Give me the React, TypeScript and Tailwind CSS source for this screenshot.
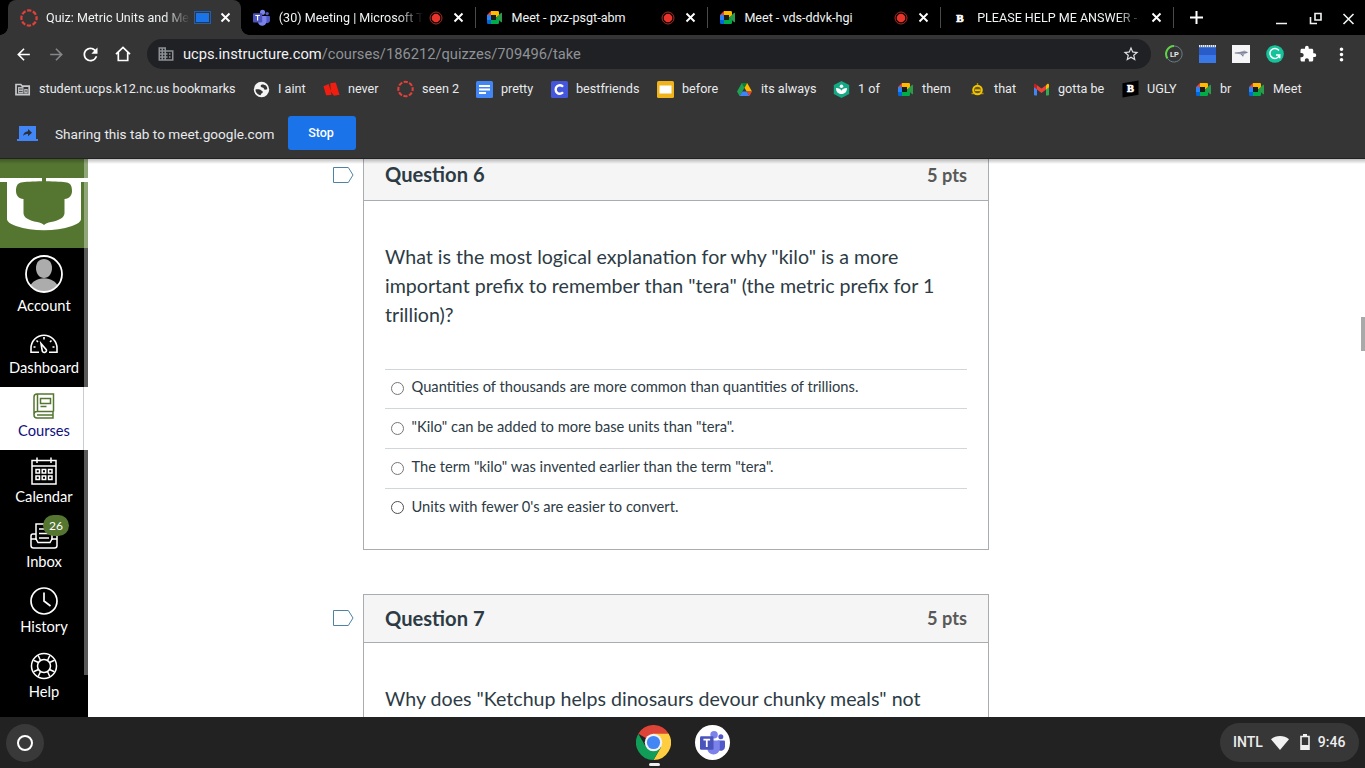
import type { ReactNode } from 'react';
import {
  MdArrowBack,
  MdArrowForward,
  MdBusiness,
  MdExtension,
  MdMoreVert,
  MdRefresh,
  MdStarBorder,
} from 'react-icons/md';

/* ---------- favicons ---------- */

function CanvasRing() {
  return (
    <svg width="18" height="18" viewBox="0 0 18 18">
      <circle cx="9" cy="9" r="7.6" fill="none" stroke="#e2403a" strokeWidth="2.2" strokeDasharray="4.4 1.57" strokeDashoffset="2.2" />
    </svg>
  );
}

function MeetIcon() {
  return (
    <svg width="17" height="17" viewBox="0 0 17 17">
      <path d="M1 6 5 2v4z" fill="#ea4335" />
      <path d="M1 6h4v5H1z" fill="#2684fc" />
      <path d="M1 11h4v4H2.2A1.2 1.2 0 0 1 1 13.8z" fill="#0066da" />
      <path d="M5 2h6.8A1.2 1.2 0 0 1 13 3.2V7l-3 1.5V6H5z" fill="#ffba00" />
      <path d="M5 11h5V8.5l3 2v3.3a1.2 1.2 0 0 1-1.2 1.2H5z" fill="#00ac47" />
      <path d="m10 8.5 5.2-4.7c.4-.3.8-.1.8.4v8.600c0 .5-.4.7-.8.4z" fill="#2b9a4a" />
      <path d="M5 6h5v5H5z" fill="#1c1a14" />
    </svg>
  );
}

function TeamsIcon({ size = 17 }: { size?: number }) {
  return (
    <svg width={size} height={size} viewBox="0 0 24 24">
      <circle cx="20" cy="6.5" r="2.4" fill="#5059c9" />
      <path d="M17 10h6a1 1 0 0 1 1 1v5a4 4 0 0 1-6 3.4z" fill="#5059c9" />
      <circle cx="13.5" cy="4.5" r="3.6" fill="#7b83eb" />
      <path d="M7.5 10H18a1 1 0 0 1 1 1v6.5a6 6 0 0 1-12 0z" fill="#7b83eb" />
      <rect x="0" y="6" width="13" height="13" rx="1.2" fill="#4b53bc" />
      <path d="M3.3 9.2h6.4M6.5 9.2v7" stroke="#fff" strokeWidth="1.7" fill="none" />
    </svg>
  );
}

function BrainlyIcon({ skew = false }: { skew?: boolean }) {
  return (
    <svg width="18" height="18" viewBox="0 0 18 18">
      <path d={skew ? 'M.5 3 17.500 0v15L.5 18z' : 'M0 0h18v18H0z'} fill="#000" />
      <text x="9" y="12.500" textAnchor="middle" fontSize="11" fontWeight="900" fill="#fff" stroke="#fff" strokeWidth=".7" fontFamily="Liberation Serif, serif">
        B
      </text>
    </svg>
  );
}

function FolderIcon() {
  return (
    <svg width="17" height="17" viewBox="0 0 17 17">
      <path d="M2 3.500h4.800l1.500 1.700h6.900v8.500H2z" fill="none" stroke="#c8cacd" strokeWidth="1.700" />
      <path d="M4 6h5.500v6.500H4zM10.200 8h3.500v4.500h-3.500z" fill="#b5b7ba" />
      <path d="M5 8h3.500M5 10.500h3.500M11 10h2" stroke="#353535" strokeWidth=".8" />
    </svg>
  );
}

function GlobeIcon() {
  return (
    <svg width="17" height="17" viewBox="0 0 17 17">
      <circle cx="8.500" cy="8.500" r="7.700" fill="#f4f4f4" />
      <path d="M9 3.500c-1.500.5-2 2-.5 2.700 1.200.6 2.500.4 2.500 1.800 0 1 1.500 1 3.200.3.3-2.500-1.200-4.800-5.200-4.800zM2.500 8.500C4 8 7 8 7.800 9c.6.9 2 .8 2 2 0 1.500-1.800 1-2.100 3.200-3-.4-5.200-2.600-5.200-5.700z" fill="#353535" />
    </svg>
  );
}

function RedMark() {
  return (
    <svg width="18" height="17" viewBox="0 0 18 17">
      <path d="M.500 5 6 2.800l2.300 7.200L7.600 2l5.900-1L17.500 14l-6 1.200L8.500 11l.5 3.300-5.700.4z" fill="#f01d10" />
    </svg>
  );
}

function DocsIcon() {
  return (
    <svg width="17" height="17" viewBox="0 0 17 17">
      <rect width="17" height="17" rx="1.500" fill="#4285f4" />
      <path d="M3 5h11M3 8.500h11M3 12h7" stroke="#fff" strokeWidth="1.800" />
    </svg>
  );
}

function CleverIcon() {
  return (
    <svg width="17" height="17" viewBox="0 0 17 17">
      <rect width="17" height="17" rx="1.500" fill="#4456dc" />
      <path d="M12 5.700A4.200 4.200 0 1 0 12 11.300" fill="none" stroke="#fff" strokeWidth="2.400" />
    </svg>
  );
}

function SlidesIcon() {
  return (
    <svg width="17" height="17" viewBox="0 0 17 17">
      <rect width="17" height="17" rx="1.500" fill="#f0b41a" />
      <rect x="2.500" y="4.500" width="12" height="8" fill="#fff" />
    </svg>
  );
}

function DriveIcon() {
  return (
    <svg width="17" height="17" viewBox="0 0 17 17">
      <path d="M5.800 2h5.400L8.500 6.700z" fill="#00832d" />
      <path d="M5.800 2 1 10.500 3.600 15 8.500 6.700z" fill="#1fa350" />
      <path d="M11.200 2 16 10.500h-5.300L8.500 6.700z" fill="#ffba00" />
      <path d="M16 10.500 13.400 15l-2.700-4.500z" fill="#ea4335" />
      <path d="M6.300 10.500h4.400L13.400 15H3.600z" fill="#3f84f5" />
    </svg>
  );
}

function HexIcon() {
  return (
    <svg width="17" height="17" viewBox="0 0 17 17">
      <path d="m8.500 0 7.700 4v9l-7.700 4-7.700-4V4z" fill="#14a884" />
      <circle cx="8.500" cy="5.300" r="1.800" fill="#fff" />
      <path d="M3 7c3 0 4.700 1 5.500 2.700C9.300 8 11 7 14 7c0 3.700-2 6-5.500 6S3 10.700 3 7z" fill="#fff" />
    </svg>
  );
}

function EmojiIcon() {
  return (
    <svg width="17" height="17" viewBox="0 0 17 17">
      <path d="M8.500 2v4M2.500 12.500h12" stroke="#b58e00" strokeWidth="1.400" />
      <circle cx="8.500" cy="9" r="4.300" fill="#6b5a0a" stroke="#f2c500" strokeWidth="2" />
      <path d="M6 9.200h5.500" stroke="#f2c500" strokeWidth="1.700" />
    </svg>
  );
}

function GmailIcon() {
  return (
    <svg width="17" height="17" viewBox="0 0 17 17">
      <path d="M1 4.500 4 6v8.500H2a1 1 0 0 1-1-1z" fill="#4285f4" />
      <path d="M16 4.500 13 6v8.500h2a1 1 0 0 0 1-1z" fill="#34a853" />
      <path d="M13 4.200 14.200 3C15 2.300 16 3 16 4v2.200l-3 2.300z" fill="#fbbc04" />
      <path d="M4 8.500V4.200L8.500 7.600 13 4.200v4.300L8.500 12z" fill="#ea4335" />
      <path d="M1 6.200V4c0-1 1-1.700 1.800-1L4 4.200v4.300z" fill="#c5221f" />
    </svg>
  );
}

/* ---------- tab strip ---------- */

function RecordDot() {
  return (
    <svg width="14" height="14" viewBox="0 0 14 14">
      <circle cx="7" cy="7" r="6" fill="none" stroke="#b3261e" strokeWidth="1" />
      <circle cx="7" cy="7" r="4.300" fill="#e8352c" />
    </svg>
  );
}

function CastingBadge() {
  return (
    <span className="flex h-[13px] w-[17px] items-center justify-center border border-[#1a5fb8]">
      <span className="h-[9px] w-[13px] bg-[#1a73e8]" />
    </span>
  );
}

type Tab = { title: string; icon: ReactNode; badge?: ReactNode; active?: boolean; fade?: boolean };

const tabs: Tab[] = [
  { title: 'Quiz: Metric Units and Me', icon: <CanvasRing />, badge: <CastingBadge />, active: true, fade: true },
  { title: '(30) Meeting | Microsoft T', icon: <TeamsIcon />, badge: <RecordDot />, fade: true },
  { title: 'Meet - pxz-psgt-abm', icon: <MeetIcon />, badge: <RecordDot /> },
  { title: 'Meet - vds-ddvk-hgi', icon: <MeetIcon />, badge: <RecordDot /> },
  { title: 'PLEASE HELP ME ANSWER -', icon: <BrainlyIcon />, fade: true },
];

function TabStrip() {
  return (
    <div className="flex h-[35px] bg-black pl-2">
      {tabs.map((tab) => (
        <div
          key={tab.title}
          className={[
            'relative flex h-full w-[232.800px] shrink-0 items-center pl-3 pr-[10px]',
            tab.active ? 'rounded-t-lg bg-[#353535]' : '',
          ].join(' ')}
        >
          {tab.active && (
            <>
              <span className="absolute -left-2 bottom-0 h-2 w-2 bg-[radial-gradient(circle_at_0_0,#000_7.500px,#353535_8px)]" />
              <span className="absolute -right-2 bottom-0 h-2 w-2 bg-[radial-gradient(circle_at_100%_0,#000_7.500px,#353535_8px)]" />
            </>
          )}
          <span className="flex w-[18px] shrink-0 justify-center">{tab.icon}</span>
          <span
            className={[
              'ml-2 min-w-0 flex-1 whitespace-nowrap text-[12.550px] leading-4 text-[#f1f3f4]',
              tab.fade ? '[mask-image:linear-gradient(to_right,#000_calc(100%-26px),transparent)]' : '',
            ].join(' ')}
          >
            {tab.title}
          </span>
          {tab.badge && <span className="ml-1 flex w-[18px] shrink-0 justify-center">{tab.badge}</span>}
          <svg className="ml-[8px] shrink-0" width="11" height="11" viewBox="0 0 11 11" stroke="#fff" strokeWidth="1.900">
            <path d="m1.500 1.500 8 8M9.500 1.500l-8 8" />
          </svg>
          {!tab.active && <span className="absolute -right-[2px] top-[7px] h-[21px] w-px bg-[#4a4a4a]" />}
        </div>
      ))}
      <div className="flex flex-1 items-center">
        <svg className="ml-[18px]" width="13" height="13" viewBox="0 0 13 13" stroke="#fff" strokeWidth="2">
          <path d="M6.500 0v13M0 6.500h13" />
        </svg>
        <svg className="ml-auto mr-[5px] mt-[2px]" width="84" height="18" viewBox="0 0 84 18" fill="none" stroke="#f1f3f4" strokeWidth="1.600">
          <path d="M0 13.500h11M39 3.500h6v6.500h-6zM34.500 7v6.500H41M67.500 4l10 10M77.500 4l-10 10" />
        </svg>
      </div>
    </div>
  );
}

/* ---------- toolbar ---------- */

function Toolbar() {
  return (
    <div className="flex h-[38px] items-center pl-[14px] text-white">
      <MdArrowBack className="h-[19px] w-[19px]" />
      <MdArrowForward className="ml-[14px] h-[19px] w-[19px] text-[#85878a]" />
      <MdRefresh className="ml-[14px] h-[21px] w-[21px]" />
      <svg className="ml-[14px]" width="16" height="18" viewBox="0 0 16 18" fill="none" stroke="#fff" strokeWidth="1.700">
        <path d="M1 9.200 8 2.500l7 6.700M3.300 7.500v8h9.400v-8" />
      </svg>
      <div className="ml-4 flex h-[30px] w-[1004px] items-center rounded-full bg-[#202124] pl-[10px] pr-[11px]">
        <MdBusiness className="h-[18px] w-[18px] text-[#8c9094]" />
        <span className="ml-2 text-[14.700px] text-[#f1f3f4]">
          ucps.instructure.com<span className="text-[#8f9296]">/courses/186212/quizzes/709496/take</span>
        </span>
        <MdStarBorder className="ml-auto h-[18px] w-[18px] text-[#dfe1e5]" />
      </div>
      <svg className="ml-[14px]" width="18" height="18" viewBox="0 0 18 18">
        <path d="M9 1a8 8 0 0 0-6.500 12.500" fill="none" stroke="#63d14a" strokeWidth="2" />
        <path d="M2.500 13.500A8 8 0 1 0 9 1" fill="none" stroke="#66828a" strokeWidth="1" />
        <text x="9.500" y="12" textAnchor="middle" fontSize="7.500" fontWeight="700" fill="#e6e6e6">
          LP
        </text>
      </svg>
      <svg className="ml-4" width="17" height="18" viewBox="0 0 17 18">
        <path d="M0 2h17v16H0z" fill="#3b78e7" />
        <path d="M0 3h17v7H0z" fill="#2a5cc7" />
        <path d="M0 1h17" stroke="#e8eaed" strokeWidth="2" strokeDasharray="1.500 .5" />
      </svg>
      <svg className="ml-4" width="18" height="18" viewBox="0 0 18 18">
        <path d="M0 0h18v18H0z" fill="#f5f5f7" />
        <path d="m1.500 8 6-1 5-1.500 4 2-4 1.500-1.500 3-2-2.500z" fill="#a3a5b8" />
        <path d="m3 8 12-.5M9 9l2 2" stroke="#6a6d86" strokeWidth=".7" />
      </svg>
      <svg className="ml-4" width="18" height="18" viewBox="0 0 18 18">
        <circle cx="9" cy="9" r="8.800" fill="#15c39a" />
        <path d="M13 5.500A5 5 0 1 0 13.700 10H10m3.700 0v3.300" fill="none" stroke="#fff" strokeWidth="1.500" />
      </svg>
      <MdExtension className="ml-[15px] h-[18px] w-[18px]" />
      <MdMoreVert className="ml-[14px] h-[21px] w-[21px]" />
    </div>
  );
}

type Bookmark = { label: string; icon: ReactNode; width: string };

const bookmarks: Bookmark[] = [
  { label: 'student.ucps.k12.nc.us bookmarks', icon: <FolderIcon />, width: 'w-[239px]' },
  { label: 'I aint', icon: <GlobeIcon />, width: 'w-[70px]' },
  { label: 'never', icon: <RedMark />, width: 'w-[74px]' },
  { label: 'seen 2', icon: <CanvasRing />, width: 'w-[79px]' },
  { label: 'pretty', icon: <DocsIcon />, width: 'w-[75px]' },
  { label: 'bestfriends', icon: <CleverIcon />, width: 'w-[106px]' },
  { label: 'before', icon: <SlidesIcon />, width: 'w-[79px]' },
  { label: 'its always', icon: <DriveIcon />, width: 'w-[97px]' },
  { label: '1 of', icon: <HexIcon />, width: 'w-[64px]' },
  { label: 'them', icon: <MeetIcon />, width: 'w-[72px]' },
  { label: 'that', icon: <EmojiIcon />, width: 'w-[64px]' },
  { label: 'gotta be', icon: <GmailIcon />, width: 'w-[89px]' },
  { label: 'UGLY', icon: <BrainlyIcon skew />, width: 'w-[73px]' },
  { label: 'br', icon: <MeetIcon />, width: 'w-[53px]' },
  { label: 'Meet', icon: <MeetIcon />, width: 'w-[60px]' },
];

function BookmarkBar() {
  return (
    <div className="flex h-8 items-center pl-[14px]">
      {bookmarks.map((b, i) => (
        <div key={i} className={`flex shrink-0 items-center gap-2 ${b.width}`}>
          <span className="flex w-[17px] shrink-0 justify-center">{b.icon}</span>
          <span className="whitespace-nowrap text-[12.620px] leading-4 text-[#e8eaed]">{b.label}</span>
        </div>
      ))}
    </div>
  );
}

function SharingBar() {
  return (
    <div className="flex h-[54px] items-center border-b border-[#222222] pl-[17px] pt-[3px]">
      <svg className="mt-px" width="21" height="16" viewBox="0 0 21 16">
        <path d="M2 0h17v13h2v2H0v-2h2z" fill="#4285f4" />
        <path d="M6 10c.5-3 2.500-4.500 5-4.700V3l4 3.700-4 3.600V8C9 8 7.300 8.500 6 10z" fill="#2b2f38" />
      </svg>
      <span className="ml-[17px] mt-[3px] w-[233px] whitespace-nowrap text-[13.600px] text-[#e8eaed]">
        Sharing this tab to meet.google.com
      </span>
      <button className="h-[34px] w-[68px] rounded-[3px] bg-[#1a73e8] pr-[2px] text-[12.500px] font-medium text-white">Stop</button>
    </div>
  );
}

/* ---------- canvas sidebar ---------- */

function DistrictLogo() {
  return (
    <svg className="block shrink-0" width="88" height="89" viewBox="0 0 88 89">
      <path d="M0 0h88v89H0z" fill="#557631" />
      <path d="M0 19h88v4h-7v37c0 3-4 5-9 7-9 3-18 4.200-28 4.200S25 70 16 67c-5-2-9-4-9-7V23H0z" fill="#fff" />
      <path d="M42 19h4v3.200c9 .2 17 .5 21 1.300 4.200 1 5 4.500 5 8.500s-2.500 8-7.500 8v14c0 5-6 7.500-13.500 9-3.500.7-5.500 1.500-7 3-1.500-1.500-3.500-2.300-7-3-7.500-1.500-13.500-4-13.500-9V40c-5 0-7.500-4-7.500-8s.8-7.500 5-8.500c4-.8 12-1.100 21-1.300z" fill="#557631" />
    </svg>
  );
}

function AvatarIcon() {
  return (
    <svg width="38" height="38" viewBox="0 0 38 38">
      <clipPath id="avatar-clip">
        <circle cx="19" cy="19" r="17.500" />
      </clipPath>
      <g clipPath="url(#avatar-clip)" fill="#acacac">
        <path d="M19 4c5 0 8 3.800 8 9 0 6-3.500 10-8 10s-8-4-8-10c0-5.200 3-9 8-9z" />
        <path d="M4 38c0-9 4-12 10-14 3-1 7-1 10 0 6 2 10 5 10 14z" />
      </g>
      <circle cx="19" cy="19" r="18" fill="none" stroke="#fff" strokeWidth="1.800" />
    </svg>
  );
}

function DashboardIcon() {
  return (
    <svg width="30" height="20" viewBox="0 0 30 20" fill="none" stroke="currentColor" strokeWidth="1.600">
      <path d="M10 18.200H2v-4a13 13 0 0 1 26 0v4h-8" />
      <path d="m12 9.500 5.300 6.200c1 2.500-2.800 4-4 1.500zM15 3v2.500M7.500 6.500l1.500 1.500M22.500 6.500 21 8M4.500 13h2M23.500 13h2" />
    </svg>
  );
}

function CoursesIcon() {
  return (
    <svg width="24" height="26" viewBox="0 0 24 26" fill="none" stroke="currentColor" strokeWidth="1.500">
      <path d="M21.500 18.500V1H5a3 3 0 0 0-3 3v18c0 2 1 3 3 3h16v-6.500H5a3 3 0 0 0-3 3M5.500 1v17.500M5 22h16" />
      <path d="M8.500 5.500h10v5h-10zM8.500 13.500h6" />
    </svg>
  );
}

function CalendarIcon() {
  return (
    <svg width="26" height="28" viewBox="0 0 26 28" fill="none" stroke="currentColor" strokeWidth="1.500">
      <path d="M1 3.500h24V27H1zM1 9h24M6 .5V6M20 .5V6" />
      <path d="M5 12.500h3.500V16H5zM11.200 12.500h3.500V16h-3.500zM17.500 12.500H21V16h-3.500zM5 19h3.500v3.500H5zM11.200 19h3.500v3.500h-3.500zM17.500 19H21v3.500h-3.500z" />
    </svg>
  );
}

function InboxIcon() {
  return (
    <svg width="28" height="26" viewBox="0 0 28 26" fill="none" stroke="currentColor" strokeWidth="1.500">
      <path d="M6 17V1h16v16M9 6h10M9 10.500h10M9 15h10" />
      <path d="M6 11H3c-1.200 0-2 1-2 2v9.500C1 24 2 25 3.500 25h21c1.500 0 2.500-1 2.500-2.500V13c0-1-.8-2-2-2h-3M1 16h5l2 3.500h12l2-3.500h5" />
    </svg>
  );
}

function HistoryIcon() {
  return (
    <svg width="28" height="28" viewBox="0 0 28 28" fill="none" stroke="currentColor" strokeWidth="1.700">
      <circle cx="14" cy="14" r="13" />
      <path d="M14 5.500V14l6.500 5" />
    </svg>
  );
}

function HelpIcon() {
  return (
    <svg width="28" height="28" viewBox="0 0 28 28" fill="none" stroke="currentColor" strokeWidth="1.500">
      <circle cx="14" cy="14" r="12.500" />
      <circle cx="14" cy="14" r="6.500" />
      <path d="m10.500 8.500-2.300-5M17.500 8.500l2.300-5M10.500 19.500l-2.300 5M17.500 19.500l2.300 5M8.500 10.500l-5-2.300M8.500 17.500l-5 2.300M19.500 10.500l5-2.300M19.500 17.500l5 2.300" />
    </svg>
  );
}

type NavItem = { label: string; icon: ReactNode; box: string; iconBox: string; badge?: string };

const navItems: NavItem[] = [
  { label: 'Account', icon: <AvatarIcon />, box: 'h-[75px] pt-[7px] text-white', iconBox: 'h-[41px] pb-[3px]' },
  { label: 'Dashboard', icon: <DashboardIcon />, box: 'h-[64px] pt-[8px] text-white', iconBox: 'h-[27px] pb-[2px]' },
  { label: 'Courses', icon: <CoursesIcon />, box: 'h-[63px] pt-[5px] bg-white text-[#557631]', iconBox: 'h-[29px] pb-[2px]' },
  { label: 'Calendar', icon: <CalendarIcon />, box: 'h-[65px] pt-[6px] text-white', iconBox: 'h-[31px] pb-[2px]' },
  { label: 'Inbox', icon: <InboxIcon />, box: 'h-[65px] pt-[6px] text-white', iconBox: 'h-[31px] pb-[2px]', badge: '26' },
  { label: 'History', icon: <HistoryIcon />, box: 'h-[65px] pt-[6px] text-white', iconBox: 'h-[31px] pb-[2px]' },
  { label: 'Help', icon: <HelpIcon />, box: 'h-[65px] pt-[6px] text-white', iconBox: 'h-[31px] pb-[2px]' },
];

function Sidebar() {
  return (
    <nav className="relative flex w-[88px] shrink-0 flex-col overflow-hidden bg-black font-['Lato',sans-serif]">
      <DistrictLogo />
      {navItems.map((item) => (
        <div key={item.label} className={`relative flex shrink-0 flex-col items-center ${item.box}`}>
          <span className={`flex items-center justify-center ${item.iconBox}`}>{item.icon}</span>
          <span className={['text-[14.700px] leading-[18px]', item.label === 'Courses' ? 'text-[#10107c]' : ''].join(' ')}>
            {item.label}
          </span>
          {item.badge && (
            <span className="absolute left-[43px] top-0 flex h-[21px] w-[26px] items-center justify-center rounded-full bg-[#557631] text-[12px] text-white">
              {item.badge}
            </span>
          )}
        </div>
      ))}
      <span className="absolute right-0 top-0 h-[516px] w-1 bg-white/35" />
      <span className="absolute right-1 top-[228px] h-[63px] w-px bg-[#c7cdd1]" />
    </nav>
  );
}

/* ---------- quiz ---------- */

type Question = { title: string; points: string; lines: string[]; answers: string[]; first?: boolean };

const questions: Question[] = [
  {
    title: 'Question 6',
    points: '5 pts',
    lines: [
      'What is the most logical explanation for why "kilo" is a more',
      'important prefix to remember than "tera" (the metric prefix for 1',
      'trillion)?',
    ],
    answers: [
      'Quantities of thousands are more common than quantities of trillions.',
      '"Kilo" can be added to more base units than "tera".',
      'The term "kilo" was invented earlier than the term "tera".',
      "Units with fewer 0's are easier to convert.",
    ],
    first: true,
  },
  {
    title: 'Question 7',
    points: '5 pts',
    lines: ['Why does "Ketchup helps dinosaurs devour chunky meals" not'],
    answers: [],
  },
];

function FlagIcon({ className }: { className: string }) {
  return (
    <svg className={`shrink-0 ${className}`} width="22" height="18" viewBox="0 0 22 18">
      <path d="M1.500 1.500h14.800L21 9l-4.700 7.500H1.500z" fill="#fff" stroke="#4f83a6" />
    </svg>
  );
}

function QuestionCard({ question }: { question: Question }) {
  const { title, points, lines, answers, first } = question;
  return (
    <div className={['flex shrink-0 items-start', first ? 'h-[391px]' : 'mt-[44px]'].join(' ')}>
      <FlagIcon className={first ? 'mt-[7px]' : 'mt-[15px]'} />
      <section
        className={[
          'ml-[9px] w-[626px] border-x border-[#a9adb0] text-[#2d3b45]',
          first ? 'h-full border-b' : 'h-[200px] border-t',
        ].join(' ')}
      >
        <header
          className={[
            'flex items-center justify-between border-b border-[#a9adb0] bg-[#f5f5f5] px-[21px] font-bold',
            first ? 'h-[42px] pb-[11px]' : 'h-[48px] pb-px',
          ].join(' ')}
        >
          <span className="text-[20.150px] leading-6">{title}</span>
          <span className={['text-[18.200px] leading-6 text-[#595959]', first ? 'pt-[2px]' : ''].join(' ')}>{points}</span>
        </header>
        <div className="px-[21px] pt-[41px]">
          {lines.map((line) => (
            <p key={line} className="whitespace-nowrap text-[19.620px] leading-[29px]">
              {line}
            </p>
          ))}
          <div className="mt-[40px]">
            {answers.map((answer, i) => (
              <label key={answer} className={['flex items-start border-t border-[#d3d6d8] pl-[6px]', i ? 'h-10' : 'h-[39px]'].join(' ')}>
                <span
                  className={[
                    'h-[13px] w-[13px] shrink-0 rounded-full border bg-white',
                    i === 0 || i === 3 ? 'mt-[12px]' : 'mt-[13px]',
                    i === 3 ? 'border-[#4f4f4f]' : 'border-[#767676]',
                  ].join(' ')}
                />
                <span className={['ml-[7.500px] whitespace-nowrap text-[14.700px] leading-5', i ? 'mt-[7px]' : 'mt-[6px]'].join(' ')}>
                  {answer}
                </span>
              </label>
            ))}
          </div>
        </div>
      </section>
    </div>
  );
}

/* ---------- shelf ---------- */

function ChromeLogo() {
  return (
    <svg width="35" height="35" viewBox="0 0 48 48">
      <path d="M24 24 3.200 12A24 24 0 0 1 44.800 12z" fill="#db4437" />
      <path d="M24 12h20.800A24 24 0 0 1 24 48l10.400-18z" fill="#ffcd40" />
      <path d="M3.200 12 13.600 30 24 36l10.400-6L24 48A24 24 0 0 1 3.200 12z" fill="#0f9d58" />
      <circle cx="24" cy="24" r="12" fill="#f1f1f1" />
      <circle cx="24" cy="24" r="9" fill="#4285f4" />
    </svg>
  );
}

function Shelf() {
  return (
    <footer className="relative flex h-[51px] shrink-0 items-center bg-[#222222]">
      <div className="ml-[6px] flex h-[38px] w-[38px] items-center justify-center rounded-full bg-[#393939]">
        <span className="h-4 w-4 rounded-full border-2 border-white" />
      </div>
      <div className="ml-[592px] flex items-center gap-6">
        <div className="relative">
          <ChromeLogo />
          <span className="absolute -bottom-[6px] left-[13px] h-[3px] w-[11px] rounded-full bg-[#eeeeee]" />
        </div>
        <div className="flex h-[35px] w-[35px] items-center justify-center rounded-full bg-white">
          <TeamsIcon size={25} />
        </div>
      </div>
      <div className="ml-auto mr-[6px] flex h-[39px] w-[139px] items-center rounded-full bg-[#373737] pl-[13px] text-[14px] font-medium text-[#eeeeee]">
        <span>INTL</span>
        <svg className="ml-2" width="18" height="14" viewBox="0 0 18 14">
          <path d="M0 3.200C5-1 13-1 18 3.200L9 14z" fill="#f1f1f1" />
        </svg>
        <svg className="mb-[2px] ml-[11px]" width="10" height="16" viewBox="0 0 10 16">
          <path d="M1 2.500h8v12.600H1z" fill="none" stroke="#f1f1f1" strokeWidth="1.600" />
          <path d="M3 0h4v2H3zM1 11h8v4H1z" fill="#f1f1f1" />
        </svg>
        <span className="ml-2">9:46</span>
      </div>
    </footer>
  );
}

export default function App() {
  return (
    <div className="flex h-[768px] w-[1365px] flex-col overflow-hidden bg-white font-['Roboto',sans-serif]">
      <div className="h-[159px] shrink-0 bg-[#353535]">
        <TabStrip />
        <Toolbar />
        <BookmarkBar />
        <SharingBar />
      </div>
      <div className="relative flex min-h-0 flex-1">
        <Sidebar />
        <main className="flex min-w-0 flex-1 flex-col overflow-hidden bg-white pl-[244px] font-['Lato',sans-serif]">
          {questions.map((q) => (
            <QuestionCard key={q.title} question={q} />
          ))}
        </main>
        <span className="absolute right-0 top-[158px] h-[34px] w-1 bg-[#a9a9a9]" />
        <span className="absolute inset-x-0 top-0 h-[5px] bg-linear-to-b from-black/25 to-transparent" />
      </div>
      <Shelf />
    </div>
  );
}
